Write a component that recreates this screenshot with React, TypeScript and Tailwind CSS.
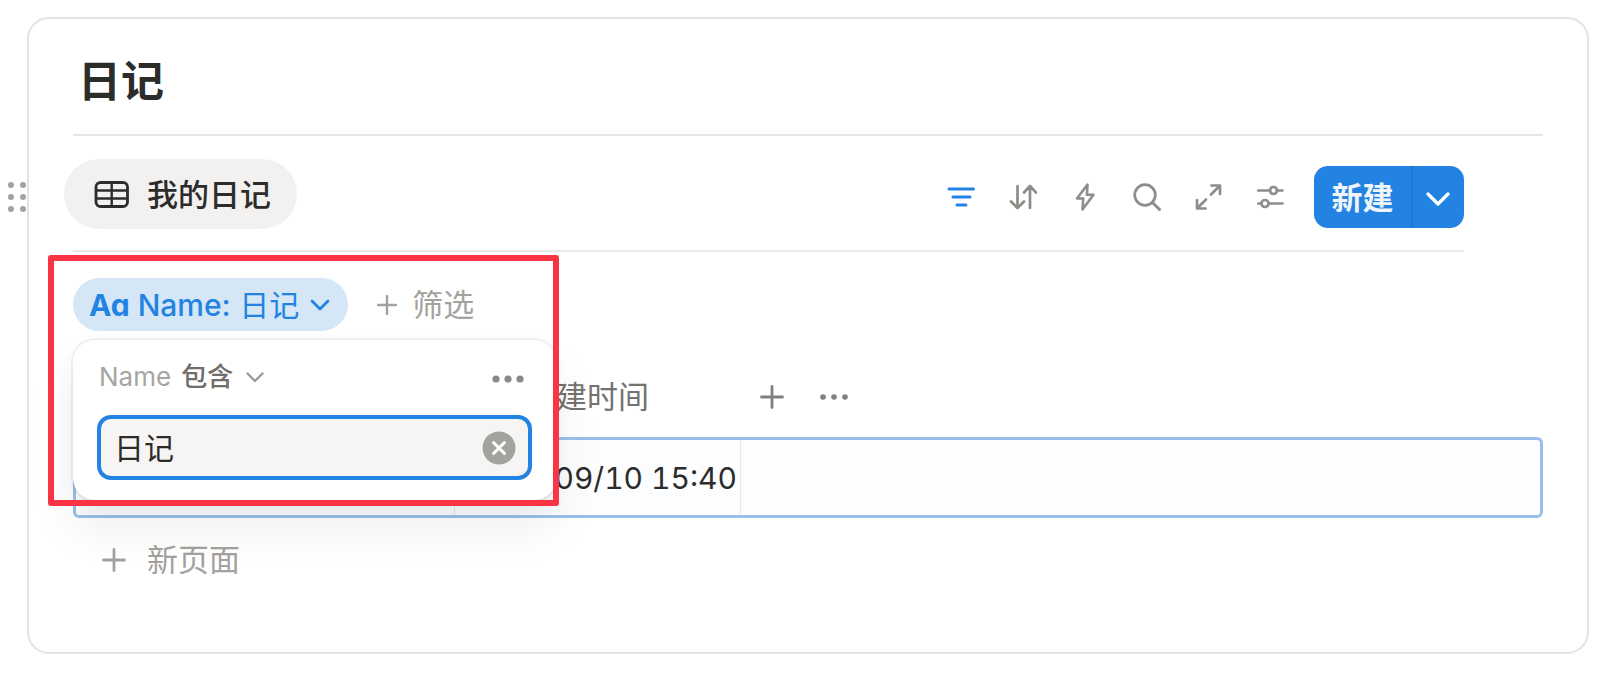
import type { ReactNode } from "react"

type IconProps = {
  size: number
  strokeWidth?: number
  className?: string
  children: ReactNode
}

const Icon = ({ size, strokeWidth = 3, className, children }: IconProps) => (
  <svg
    width={size}
    height={size}
    viewBox={`0 0 ${size} ${size}`}
    fill="none"
    stroke="currentColor"
    strokeWidth={strokeWidth}
    strokeLinecap="round"
    strokeLinejoin="round"
    className={className}
    aria-hidden="true"
  >
    {children}
  </svg>
)

const Plus = () => (
  <Icon size={24} strokeWidth={2.8} className="shrink-0">
    <path d="M12 1.5v21M1.5 12h21" />
  </Icon>
)

const SmallPlus = () => (
  <Icon size={20} strokeWidth={2.4} className="shrink-0">
    <path d="M10 1v18M1 10h18" />
  </Icon>
)

const Dots = () => (
  <svg width="32" height="8" viewBox="0 0 32 8" fill="currentColor" aria-hidden="true">
    <circle cx="4" cy="4" r="3.6" />
    <circle cx="16" cy="4" r="3.6" />
    <circle cx="28" cy="4" r="3.6" />
  </svg>
)

const SmallDots = () => (
  <svg width="28" height="6" viewBox="0 0 28 6" fill="currentColor" aria-hidden="true">
    <circle cx="3" cy="3" r="2.8" />
    <circle cx="14" cy="3" r="2.8" />
    <circle cx="25" cy="3" r="2.8" />
  </svg>
)

const tools = [
  {
    label: "筛选",
    active: true,
    icon: <path d="M2 6h24.500M6 14h17M10 22h9" />,
  },
  {
    label: "排序",
    icon: <path d="M8.500 3v22M2 18.500l6.500 6.500 6.500-6.500M21 25V3M15 9.500l6-6.500 6 6.500" strokeWidth="2.700" />,
  },
  {
    label: "自动化",
    icon: <path d="M16.500 1.500L6 15.500h6.200L11.500 26.500 22.500 11.800h-6.600z" strokeWidth="2.600" />,
  },
  {
    label: "搜索",
    icon: (
      <>
        <circle cx="12" cy="12" r="10.300" strokeWidth="2.700" />
        <path d="M19.500 19.500l7 7" />
      </>
    ),
  },
  {
    label: "全屏",
    icon: <path d="M16 11.500L24.500 3M16.500 2.500H25V11M11 16.500L2.500 25M2 17v8.500h8.500" strokeWidth="2.700" />,
  },
  {
    label: "设置",
    icon: (
      <g strokeWidth="2.700">
        <path d="M1.300 7.500h11.700M20 7.500h5.500M1.300 20.500h3.200M11.500 20.500h14" />
        <circle cx="16.500" cy="7.500" r="3.500" />
        <circle cx="8" cy="20.500" r="3.500" />
      </g>
    ),
  },
]

const FilterPopover = () => (
  <div className="absolute top-[62px] left-0 z-10 flex w-[483px] flex-col gap-5 rounded-[22px] bg-white px-6 pt-[19px] pb-5 shadow-[0_0_0_2px_rgba(0,0,0,0.05),0_28px_48px_rgba(0,0,0,0.07),0_8px_20px_rgba(0,0,0,0.03)]">
    <div className="flex h-9 items-center justify-between pr-2 pl-[2px]">
      <button type="button" className="flex items-center gap-[10px] text-[26px] leading-9">
        <span className="text-[#a5a5a1]">Name</span>
        <span className="font-medium text-[#6f6e6b]">包含</span>
        <Icon size={18} strokeWidth={2.4} className="ml-[3px] text-[#9b9a96]">
          <path d="M1.500 5.500L9 13l7.500-7.500" />
        </Icon>
      </button>
      <button type="button" aria-label="更多" className="pt-1 text-[#8a8985]">
        <Dots />
      </button>
    </div>
    <div className="flex h-[65px] items-center rounded-[14px] border-4 border-[#2383e2] bg-[#f7f5f4] pr-3 pl-[13px]">
      <input
        type="text"
        aria-label="Name 包含"
        defaultValue="日记"
        className="min-w-0 flex-1 bg-transparent text-[30px] leading-10 text-[#2c2c2b] outline-none"
      />
      <button type="button" aria-label="清除">
        <svg width="34" height="34" viewBox="0 0 34 34" aria-hidden="true">
          <circle cx="17" cy="17" r="16.500" fill="#a3a29e" />
          <path d="M11.500 11.500l11 11M22.500 11.500l-11 11" stroke="#fff" strokeWidth="3" strokeLinecap="round" />
        </svg>
      </button>
    </div>
  </div>
)

const Filters = () => (
  <div className="relative pt-[26px]">
    <div className="relative flex items-center gap-[29px]">
      <button
        type="button"
        className="flex h-[53px] items-center gap-2 rounded-full bg-[#d5e7f6] pr-[18px] pl-4 text-[30px] leading-10 text-[#2383e2]"
      >
        <span className="font-bold [font-feature-settings:'cv11']">Aa</span>
        <span>
          <span className="font-medium">Name:</span> 日记
        </span>
        <Icon size={20} strokeWidth={2.8} className="ml-[3px]">
          <path d="M2 6l8 8 8-8" />
        </Icon>
      </button>
      <button type="button" className="flex items-center gap-[15px] text-[31px] leading-10 text-[#a3a29e]">
        <SmallPlus />
        筛选
      </button>
      <FilterPopover />
    </div>
    <div className="pointer-events-none absolute top-[3px] -left-[25px] z-20 h-[251px] w-[511px] rounded-[3px] border-[6px] border-[#fa3444]" />
  </div>
)

const Entries = () => (
  <table className="mt-[26px] w-full table-fixed border-separate border-spacing-0 text-left leading-10">
    <thead>
      <tr className="h-20 text-[31px] text-[#73726e]">
        <th className="w-[382px]" />
        <th className="w-[286px] p-0 pr-[92px] text-right font-normal whitespace-nowrap">建时间</th>
        <th className="p-0 pl-[19px]">
          <div className="flex items-center gap-9 text-[#80807c]">
            <button type="button" aria-label="添加属性">
              <Plus />
            </button>
            <button type="button" aria-label="更多属性">
              <SmallDots />
            </button>
          </div>
        </th>
      </tr>
    </thead>
    <tbody>
      <tr className="h-[81px] rounded-[6px] bg-[#fbfdff] text-[30px] text-[#2c2c2b] outline-3 -outline-offset-3 outline-[#9bbfea]">
        <td className="border-r border-[#e6e8eb]" />
        <td className="border-r border-[#e6e8eb] p-0 pr-[3px] text-right whitespace-nowrap tabular-nums">09/10 15:40</td>
        <td />
      </tr>
    </tbody>
  </table>
)

export default function App() {
  return (
    <main className="flex min-h-screen bg-white pt-[17px] pr-[27px] pb-6 font-['Inter','Noto_Sans_CJK_SC',sans-serif] text-[#2c2c2b]">
      <button type="button" aria-label="拖动" className="mt-[164px] h-8 w-[27px] shrink-0 pl-2">
        <svg width="18" height="32" viewBox="0 0 18 32" fill="#a3a29e" aria-hidden="true">
          <circle cx="3" cy="4" r="3" />
          <circle cx="15" cy="4" r="3" />
          <circle cx="3" cy="16" r="3" />
          <circle cx="15" cy="16" r="3" />
          <circle cx="3" cy="28" r="3" />
          <circle cx="15" cy="28" r="3" />
        </svg>
      </button>

      <section className="min-w-0 flex-1 rounded-[22px] border-2 border-[#e3e3e3] px-11 pb-[50px]">
        <header className="flex h-[117px] items-center border-b-2 border-[#e6e6e6] pt-2 pl-[5px]">
          <h1 className="text-[43px] leading-[56px] font-bold">日记</h1>
        </header>

        <div className="mr-[79px] flex h-[116px] items-center justify-between border-b-2 border-[#e9e9e9] pt-[2px]">
          <button
            type="button"
            className="-ml-[9px] flex h-[70px] items-center gap-[17px] rounded-full bg-[#f2f1ef] pt-[2px] pr-[26px] pl-[30px] text-[31px] leading-10 font-medium"
          >
            <svg width="36" height="28" viewBox="0 0 36 28" fill="none" stroke="currentColor" strokeWidth="2.800" aria-hidden="true">
              <rect x="2" y="1.500" width="31.500" height="24" rx="4.500" />
              <path d="M2 9.500h31.500M2 17.500h31.500M17.700 1.500v24" strokeWidth="2.400" />
            </svg>
            我的日记
          </button>

          <div className="flex items-center gap-[29px] pt-[6px]">
            <div className="flex items-center gap-[34px]">
              {tools.map((tool) => (
                <button
                  key={tool.label}
                  type="button"
                  aria-label={tool.label}
                  className={tool.active ? "text-[#2383e2]" : "text-[#8e8d89]"}
                >
                  <Icon size={28}>{tool.icon}</Icon>
                </button>
              ))}
            </div>
            <div className="flex h-[62px] overflow-hidden rounded-[14px] bg-[#2383e2] text-white">
              <button type="button" className="w-[97px] pt-[2px] text-[31px] leading-10 font-bold text-[#f0f5fb]">
                新建
              </button>
              <button
                type="button"
                aria-label="更多新建选项"
                className="flex w-[53px] items-center justify-center border-l-2 border-[#2577ca] pt-1 pr-[2px]"
              >
                <Icon size={24} strokeWidth={3.2}>
                  <path d="M2 7l10 10L22 7" />
                </Icon>
              </button>
            </div>
          </div>
        </div>

        <Filters />
        <Entries />

        <button type="button" className="flex h-[84px] items-center gap-[21px] pl-[29px] text-[31px] leading-10 text-[#a3a29e]">
          <Plus />
          新页面
        </button>
      </section>
    </main>
  )
}
